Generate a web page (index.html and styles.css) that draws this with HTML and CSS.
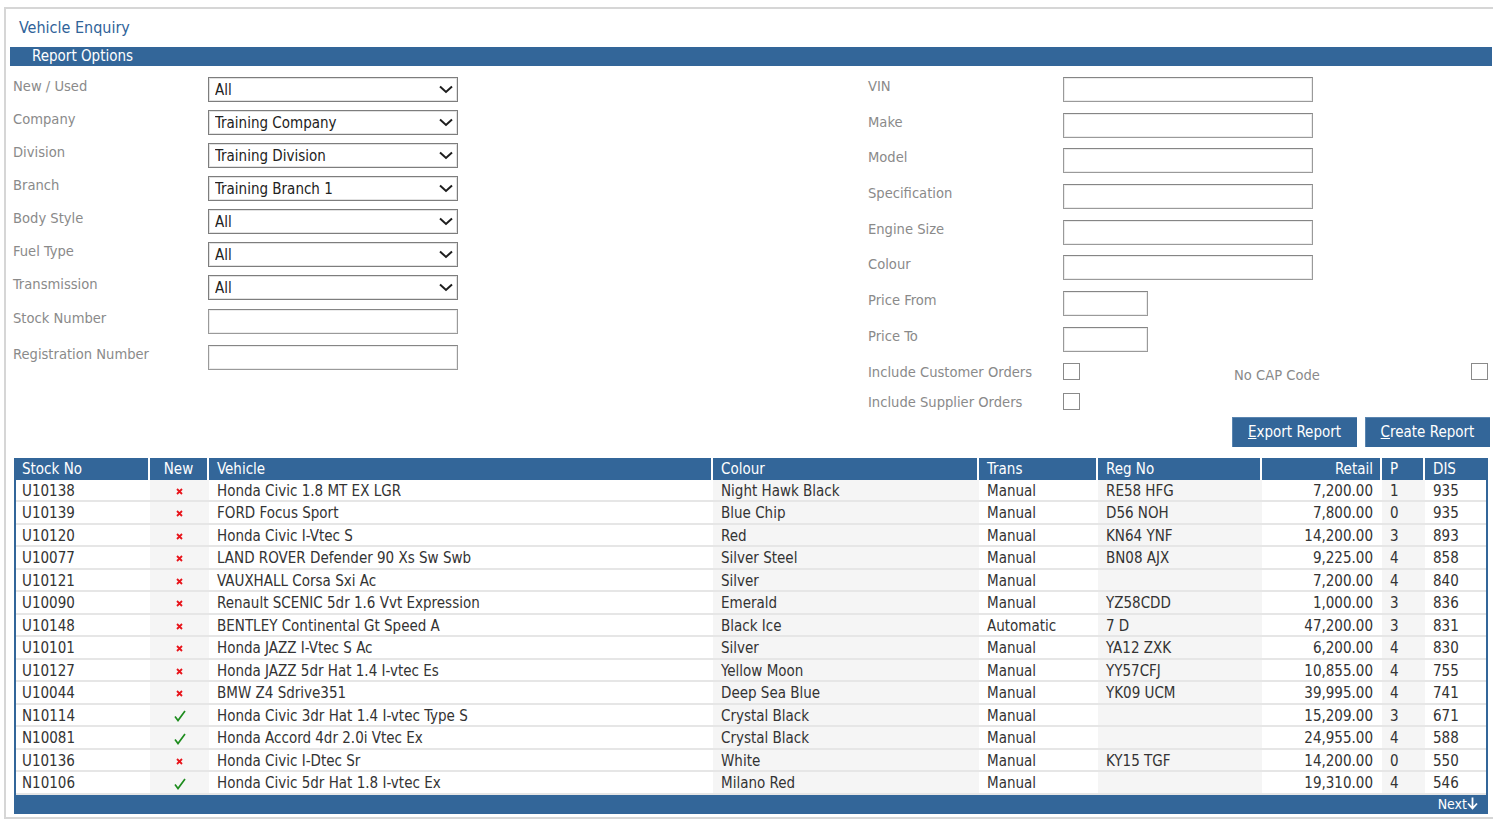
FILE: index.html
```html
<!DOCTYPE html>
<html lang="en">
<head>
    <meta charset="UTF-8">
    <meta name="viewport" content="width=device-width, initial-scale=1.0">
    <title>Vehicle Enquiry</title>
    <link rel="stylesheet" href="styles.css">
</head>
<body>
    <div class="frame">
        <h1 class="page-title">Vehicle Enquiry</h1>
        <div class="section-bar">Report Options</div>

        <div class="options">
            <div class="col col-left">
                <div class="field">
                    <label>New / Used</label>
                    <div class="select-wrap">
                        <select><option>All</option></select>
                        <svg class="chevron" width="14" height="9" viewBox="0 0 14 9"><path d="M1 1.5 L7 7 L13 1.5" fill="none" stroke="#1e1e1e" stroke-width="2"/></svg>
                    </div>
                </div>
                <div class="field">
                    <label>Company</label>
                    <div class="select-wrap">
                        <select><option>Training Company</option></select>
                        <svg class="chevron" width="14" height="9" viewBox="0 0 14 9"><path d="M1 1.5 L7 7 L13 1.5" fill="none" stroke="#1e1e1e" stroke-width="2"/></svg>
                    </div>
                </div>
                <div class="field">
                    <label>Division</label>
                    <div class="select-wrap">
                        <select><option>Training Division</option></select>
                        <svg class="chevron" width="14" height="9" viewBox="0 0 14 9"><path d="M1 1.5 L7 7 L13 1.5" fill="none" stroke="#1e1e1e" stroke-width="2"/></svg>
                    </div>
                </div>
                <div class="field">
                    <label>Branch</label>
                    <div class="select-wrap">
                        <select><option>Training Branch 1</option></select>
                        <svg class="chevron" width="14" height="9" viewBox="0 0 14 9"><path d="M1 1.5 L7 7 L13 1.5" fill="none" stroke="#1e1e1e" stroke-width="2"/></svg>
                    </div>
                </div>
                <div class="field">
                    <label>Body Style</label>
                    <div class="select-wrap">
                        <select><option>All</option></select>
                        <svg class="chevron" width="14" height="9" viewBox="0 0 14 9"><path d="M1 1.5 L7 7 L13 1.5" fill="none" stroke="#1e1e1e" stroke-width="2"/></svg>
                    </div>
                </div>
                <div class="field">
                    <label>Fuel Type</label>
                    <div class="select-wrap">
                        <select><option>All</option></select>
                        <svg class="chevron" width="14" height="9" viewBox="0 0 14 9"><path d="M1 1.5 L7 7 L13 1.5" fill="none" stroke="#1e1e1e" stroke-width="2"/></svg>
                    </div>
                </div>
                <div class="field">
                    <label>Transmission</label>
                    <div class="select-wrap">
                        <select><option>All</option></select>
                        <svg class="chevron" width="14" height="9" viewBox="0 0 14 9"><path d="M1 1.5 L7 7 L13 1.5" fill="none" stroke="#1e1e1e" stroke-width="2"/></svg>
                    </div>
                </div>
                <div class="field field-stock">
                    <label>Stock Number</label>
                    <input type="text" class="text-input">
                </div>
                <div class="field field-reg">
                    <label>Registration Number</label>
                    <input type="text" class="text-input">
                </div>
            </div>

            <div class="col col-right">
                <div class="field wide">
                    <label>VIN</label>
                    <input type="text" class="text-input">
                </div>
                <div class="field wide">
                    <label>Make</label>
                    <input type="text" class="text-input">
                </div>
                <div class="field wide">
                    <label>Model</label>
                    <input type="text" class="text-input">
                </div>
                <div class="field wide">
                    <label>Specification</label>
                    <input type="text" class="text-input">
                </div>
                <div class="field wide">
                    <label>Engine Size</label>
                    <input type="text" class="text-input">
                </div>
                <div class="field wide">
                    <label>Colour</label>
                    <input type="text" class="text-input">
                </div>
                <div class="field wide">
                    <label>Price From</label>
                    <input type="text" class="text-input short">
                </div>
                <div class="field wide">
                    <label>Price To</label>
                    <input type="text" class="text-input short">
                </div>
                <div class="check-row">
                    <label>Include Customer Orders</label>
                    <input type="checkbox" class="check">
                    <label class="cap-label">No CAP Code</label>
                    <input type="checkbox" class="check">
                </div>
                <div class="check-row last">
                    <label>Include Supplier Orders</label>
                    <input type="checkbox" class="check">
                </div>
            </div>
        </div>

        <div class="actions">
            <button class="btn"><u>E</u>xport Report</button>
            <button class="btn"><u>C</u>reate Report</button>
        </div>

        <table class="results">
            <colgroup>
                <col style="width: 134px">
                <col style="width: 59px">
                <col style="width: 504px">
                <col style="width: 266px">
                <col style="width: 119px">
                <col style="width: 164px">
                <col style="width: 120px">
                <col style="width: 43px">
                <col style="width: 61px">
            </colgroup>
            <thead>
                <tr>
                    <th>Stock No</th>
                    <th class="center">New</th>
                    <th>Vehicle</th>
                    <th>Colour</th>
                    <th>Trans</th>
                    <th>Reg No</th>
                    <th class="num">Retail</th>
                    <th>P</th>
                    <th>DIS</th>
                </tr>
            </thead>
            <tbody id="rows"></tbody>
            <tfoot>
                <tr>
                    <td colspan="9">Next<svg class="next-arrow" width="11" height="13" viewBox="0 0 11 13"><path d="M5.5 0.5 V11 M1 6.5 L5.5 11.5 L10 6.5" fill="none" stroke="#fff" stroke-width="1.8"/></svg></td>
                </tr>
            </tfoot>
        </table>
    </div>

    <script>
        // stock no, new?, vehicle, colour, trans, reg, retail, p, dis
        const stock = [
            ['U10138', false, 'Honda Civic 1.8 MT EX LGR', 'Night Hawk Black', 'Manual', 'RE58 HFG', '7,200.00', '1', '935'],
            ['U10139', false, 'FORD Focus Sport', 'Blue Chip', 'Manual', 'D56 NOH', '7,800.00', '0', '935'],
            ['U10120', false, 'Honda Civic I-Vtec S', 'Red', 'Manual', 'KN64 YNF', '14,200.00', '3', '893'],
            ['U10077', false, 'LAND ROVER Defender 90 Xs Sw Swb', 'Silver Steel', 'Manual', 'BN08 AJX', '9,225.00', '4', '858'],
            ['U10121', false, 'VAUXHALL Corsa Sxi Ac', 'Silver', 'Manual', '', '7,200.00', '4', '840'],
            ['U10090', false, 'Renault SCENIC 5dr 1.6 Vvt Expression', 'Emerald', 'Manual', 'YZ58CDD', '1,000.00', '3', '836'],
            ['U10148', false, 'BENTLEY Continental Gt Speed A', 'Black Ice', 'Automatic', '7 D', '47,200.00', '3', '831'],
            ['U10101', false, 'Honda JAZZ I-Vtec S Ac', 'Silver', 'Manual', 'YA12 ZXK', '6,200.00', '4', '830'],
            ['U10127', false, 'Honda JAZZ 5dr Hat 1.4 I-vtec Es', 'Yellow Moon', 'Manual', 'YY57CFJ', '10,855.00', '4', '755'],
            ['U10044', false, 'BMW Z4 Sdrive351', 'Deep Sea Blue', 'Manual', 'YK09 UCM', '39,995.00', '4', '741'],
            ['N10114', true, 'Honda Civic 3dr Hat 1.4 I-vtec Type S', 'Crystal Black', 'Manual', '', '15,209.00', '3', '671'],
            ['N10081', true, 'Honda Accord 4dr 2.0i Vtec Ex', 'Crystal Black', 'Manual', '', '24,955.00', '4', '588'],
            ['U10136', false, 'Honda Civic I-Dtec Sr', 'White', 'Manual', 'KY15 TGF', '14,200.00', '0', '550'],
            ['N10106', true, 'Honda Civic 5dr Hat 1.8 I-vtec Ex', 'Milano Red', 'Manual', '', '19,310.00', '4', '546']
        ];

        const crossIcon = '<svg width="7" height="7" viewBox="0 0 7 7"><path d="M1 1 L6 6 M6 1 L1 6" stroke="#e8141b" stroke-width="1.8"/></svg>';
        const tickIcon = '<svg width="12" height="12" viewBox="0 0 12 12"><path d="M1 6.5 L4 10.5 L11 1" fill="none" stroke="#1e8c1e" stroke-width="1.7"/></svg>';

        const body = document.getElementById('rows');
        stock.forEach(row => {
            const tr = document.createElement('tr');
            tr.innerHTML =
                '<td>' + row[0] + '</td>' +
                '<td class="center icon">' + (row[1] ? tickIcon : crossIcon) + '</td>' +
                '<td>' + row[2] + '</td>' +
                '<td>' + row[3] + '</td>' +
                '<td>' + row[4] + '</td>' +
                '<td>' + row[5] + '</td>' +
                '<td class="num">' + row[6] + '</td>' +
                '<td>' + row[7] + '</td>' +
                '<td>' + row[8] + '</td>';
            body.appendChild(tr);
        });
    </script>
</body>
</html>
```

FILE: styles.css
```css
html, body {
    margin: 0;
    overflow: hidden;
}

body {
    font-family: "DejaVu Sans Condensed", "DejaVu Sans", sans-serif;
    font-size: 15px;
    color: #333;
    background: #fff;
}

.frame {
    box-sizing: border-box;
    width: 1492px;
    height: 812px;
    margin: 7px 0 0 4px;
    border: 2px solid #d6d6d6;
}

.page-title {
    margin: 9px 0 9px 13px;
    font-size: 16px;
    font-weight: normal;
    line-height: 20px;
    color: #2f6399;
}

.section-bar {
    margin: 0 2px 0 4px;
    height: 19px;
    line-height: 19px;
    padding-left: 22px;
    background: #336699;
    color: #fff;
    font-size: 15px;
}

/* report options */
.options {
    display: flex;
    padding: 11px 0 0 7px;
}

.col-left {
    width: 855px;
}

.col-right {
    flex: 1;
}

.field {
    display: flex;
    align-items: flex-start;
    height: 33px;
}

.field label,
.check-row label {
    width: 195px;
    flex-shrink: 0;
    line-height: 18px;
    font-size: 14.6px;
    color: #8a8a8a;
}

.field-stock {
    margin-top: 1px;
    height: 36px;
}

.field.wide {
    height: 35.7px;
}

.select-wrap {
    position: relative;
    width: 250px;
    height: 25px;
}

.select-wrap select {
    appearance: none;
    -webkit-appearance: none;
    box-sizing: border-box;
    width: 250px;
    height: 25px;
    margin: 0;
    padding: 0 0 0 6px;
    border: 1px solid #7d7d7d;
    box-shadow: inset 0 0 0 1px #e2e2e2;
    border-radius: 0;
    background: #fff;
    font-family: inherit;
    font-size: 15px;
    color: #222;
}

.chevron {
    position: absolute;
    right: 5px;
    top: 8px;
}

.text-input {
    box-sizing: border-box;
    width: 250px;
    height: 25px;
    margin: 0;
    border: 1px solid #9a9a9a;
    border-top-color: #858585;
    box-shadow: inset 0 0 0 1px #ececec;
    background: #fff;
    font-family: inherit;
    font-size: 15px;
}

.text-input.short {
    width: 85px;
}

.check-row {
    display: flex;
    align-items: flex-start;
    height: 30px;
}

.check-row.last {
    height: 17px;
}

.check {
    appearance: none;
    -webkit-appearance: none;
    box-sizing: border-box;
    width: 17px;
    height: 17px;
    margin: 0;
    border: 1px solid #8a8a8a;
    background: #fff;
}

.check-row .cap-label {
    width: 237px;
    margin-left: 154px;
    padding-top: 3px;
}

.actions {
    display: flex;
    justify-content: flex-end;
    gap: 8px;
    padding: 7px 4px 0 0;
}

.btn {
    width: 125px;
    height: 30px;
    border: none;
    background: #336699;
    box-shadow: inset 1px 1px 0 #5a85b0;
    color: #fff;
    font-family: inherit;
    font-size: 15px;
    cursor: pointer;
}

/* results table */
.results {
    box-sizing: border-box;
    width: 1474px;
    margin: 11px 0 0 8px;
    table-layout: fixed;
    border-collapse: separate;
    border-spacing: 0;
    border-left: 2px solid #336699;
    border-right: 2px solid #336699;
}

.results th {
    height: 21px;
    padding: 1px 0 0 8px;
    line-height: 20px;
    background: #336699;
    color: #fff;
    font-size: 15px;
    font-weight: normal;
    text-align: left;
    vertical-align: top;
    border-right: 2px solid #fff;
}

.results th:first-child,
.results td:first-child {
    padding-left: 6px;
}

.results th:last-child {
    border-right: none;
}

.results td {
    padding: 3px 0 0 8px;
    line-height: 17.5px;
    vertical-align: top;
    border-bottom: 2px solid #e6e6e6;
    white-space: nowrap;
    overflow: hidden;
}

.results tbody td:nth-child(even) {
    background: #f5f5f5;
}

.results th.center,
.results td.center {
    text-align: center;
    padding-left: 0;
}

.results td.num {
    text-align: right;
    padding-right: 9px;
    padding-left: 0;
}

.results th.num {
    text-align: right;
    padding-right: 7px;
    padding-left: 0;
}

.results td.icon svg {
    vertical-align: middle;
}

.results tfoot td {
    height: 18px;
    padding: 1px 8px 0 0;
    border: none;
    background: #336699;
    color: #fff;
    text-align: right;
    font-size: 14px;
    line-height: 17px;
}

.next-arrow {
    vertical-align: -1px;
}
```
